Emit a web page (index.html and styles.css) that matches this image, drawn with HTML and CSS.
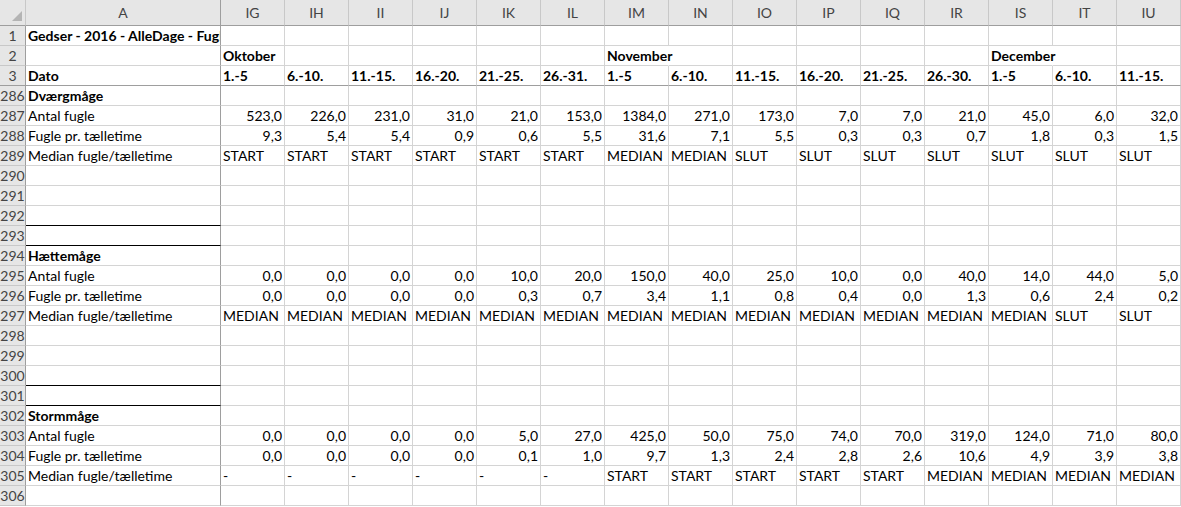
FILE: index.html
```html
<!DOCTYPE html>
<html lang="da">
<head>
    <meta charset="UTF-8">
    <title>Gedser - 2016 - AlleDage - Fugle</title>
    <link rel="stylesheet" href="styles.css">
</head>
<body>
    <table class="sheet">
        <colgroup>
            <col class="c-row">
            <col class="c-a">
            <col span="15" class="c-data">
        </colgroup>
        <thead>
            <tr class="head">
                <th class="corner"><span class="tri"></span></th>
                <th class="freeze-col">A</th>
                <th>IG</th><th>IH</th><th>II</th><th>IJ</th><th>IK</th><th>IL</th><th>IM</th><th>IN</th>
                <th>IO</th><th>IP</th><th>IQ</th><th>IR</th><th>IS</th><th>IT</th><th>IU</th>
            </tr>
        </thead>
        <tbody>
            <tr>
                <th class="rowhead">1</th>
                <td class="freeze-col bold clip">Gedser - 2016 - AlleDage - Fugle</td>
                <td></td><td></td><td></td><td></td><td></td><td></td><td></td><td></td>
                <td></td><td></td><td></td><td></td><td></td><td></td><td></td>
            </tr>
            <tr>
                <th class="rowhead">2</th>
                <td class="freeze-col"></td>
                <td class="bold">Oktober</td><td></td><td></td><td></td><td></td><td></td>
                <td class="bold spill">November</td><td></td><td></td><td></td><td></td><td></td>
                <td class="bold spill">December</td><td></td><td></td>
            </tr>
            <tr class="freeze-row">
                <th class="rowhead">3</th>
                <td class="freeze-col bold">Dato</td>
                <td class="bold">1.-5</td><td class="bold">6.-10.</td><td class="bold">11.-15.</td><td class="bold">16.-20.</td><td class="bold">21.-25.</td><td class="bold">26.-31.</td>
                <td class="bold">1.-5</td><td class="bold">6.-10.</td><td class="bold">11.-15.</td><td class="bold">16.-20.</td><td class="bold">21.-25.</td><td class="bold">26.-30.</td>
                <td class="bold">1.-5</td><td class="bold">6.-10.</td><td class="bold">11.-15.</td>
            </tr>

            <!-- Dværgmåge -->
            <tr>
                <th class="rowhead">286</th>
                <td class="freeze-col bold">Dværgmåge</td>
                <td></td><td></td><td></td><td></td><td></td><td></td><td></td><td></td>
                <td></td><td></td><td></td><td></td><td></td><td></td><td></td>
            </tr>
            <tr>
                <th class="rowhead">287</th>
                <td class="freeze-col">Antal fugle</td>
                <td class="num">523,0</td><td class="num">226,0</td><td class="num">231,0</td><td class="num">31,0</td><td class="num">21,0</td>
                <td class="num">153,0</td><td class="num">1384,0</td><td class="num">271,0</td><td class="num">173,0</td><td class="num">7,0</td>
                <td class="num">7,0</td><td class="num">21,0</td><td class="num">45,0</td><td class="num">6,0</td><td class="num">32,0</td>
            </tr>
            <tr>
                <th class="rowhead">288</th>
                <td class="freeze-col">Fugle pr. tælletime</td>
                <td class="num">9,3</td><td class="num">5,4</td><td class="num">5,4</td><td class="num">0,9</td><td class="num">0,6</td>
                <td class="num">5,5</td><td class="num">31,6</td><td class="num">7,1</td><td class="num">5,5</td><td class="num">0,3</td>
                <td class="num">0,3</td><td class="num">0,7</td><td class="num">1,8</td><td class="num">0,3</td><td class="num">1,5</td>
            </tr>
            <tr>
                <th class="rowhead">289</th>
                <td class="freeze-col">Median fugle/tælletime</td>
                <td>START</td><td>START</td><td>START</td><td>START</td><td>START</td><td>START</td>
                <td>MEDIAN</td><td>MEDIAN</td><td>SLUT</td><td>SLUT</td><td>SLUT</td><td>SLUT</td>
                <td>SLUT</td><td>SLUT</td><td>SLUT</td>
            </tr>
            <tr>
                <th class="rowhead">290</th>
                <td class="freeze-col"></td>
                <td></td><td></td><td></td><td></td><td></td><td></td><td></td><td></td>
                <td></td><td></td><td></td><td></td><td></td><td></td><td></td>
            </tr>
            <tr>
                <th class="rowhead">291</th>
                <td class="freeze-col"></td>
                <td></td><td></td><td></td><td></td><td></td><td></td><td></td><td></td>
                <td></td><td></td><td></td><td></td><td></td><td></td><td></td>
            </tr>
            <tr>
                <th class="rowhead">292</th>
                <td class="freeze-col sep"></td>
                <td></td><td></td><td></td><td></td><td></td><td></td><td></td><td></td>
                <td></td><td></td><td></td><td></td><td></td><td></td><td></td>
            </tr>
            <tr>
                <th class="rowhead">293</th>
                <td class="freeze-col sep"></td>
                <td></td><td></td><td></td><td></td><td></td><td></td><td></td><td></td>
                <td></td><td></td><td></td><td></td><td></td><td></td><td></td>
            </tr>

            <!-- Hættemåge -->
            <tr>
                <th class="rowhead">294</th>
                <td class="freeze-col bold">Hættemåge</td>
                <td></td><td></td><td></td><td></td><td></td><td></td><td></td><td></td>
                <td></td><td></td><td></td><td></td><td></td><td></td><td></td>
            </tr>
            <tr>
                <th class="rowhead">295</th>
                <td class="freeze-col">Antal fugle</td>
                <td class="num">0,0</td><td class="num">0,0</td><td class="num">0,0</td><td class="num">0,0</td><td class="num">10,0</td>
                <td class="num">20,0</td><td class="num">150,0</td><td class="num">40,0</td><td class="num">25,0</td><td class="num">10,0</td>
                <td class="num">0,0</td><td class="num">40,0</td><td class="num">14,0</td><td class="num">44,0</td><td class="num">5,0</td>
            </tr>
            <tr>
                <th class="rowhead">296</th>
                <td class="freeze-col">Fugle pr. tælletime</td>
                <td class="num">0,0</td><td class="num">0,0</td><td class="num">0,0</td><td class="num">0,0</td><td class="num">0,3</td>
                <td class="num">0,7</td><td class="num">3,4</td><td class="num">1,1</td><td class="num">0,8</td><td class="num">0,4</td>
                <td class="num">0,0</td><td class="num">1,3</td><td class="num">0,6</td><td class="num">2,4</td><td class="num">0,2</td>
            </tr>
            <tr>
                <th class="rowhead">297</th>
                <td class="freeze-col">Median fugle/tælletime</td>
                <td>MEDIAN</td><td>MEDIAN</td><td>MEDIAN</td><td>MEDIAN</td><td>MEDIAN</td><td>MEDIAN</td>
                <td>MEDIAN</td><td>MEDIAN</td><td>MEDIAN</td><td>MEDIAN</td><td>MEDIAN</td><td>MEDIAN</td>
                <td>MEDIAN</td><td>SLUT</td><td>SLUT</td>
            </tr>
            <tr>
                <th class="rowhead">298</th>
                <td class="freeze-col"></td>
                <td></td><td></td><td></td><td></td><td></td><td></td><td></td><td></td>
                <td></td><td></td><td></td><td></td><td></td><td></td><td></td>
            </tr>
            <tr>
                <th class="rowhead">299</th>
                <td class="freeze-col"></td>
                <td></td><td></td><td></td><td></td><td></td><td></td><td></td><td></td>
                <td></td><td></td><td></td><td></td><td></td><td></td><td></td>
            </tr>
            <tr>
                <th class="rowhead">300</th>
                <td class="freeze-col sep"></td>
                <td></td><td></td><td></td><td></td><td></td><td></td><td></td><td></td>
                <td></td><td></td><td></td><td></td><td></td><td></td><td></td>
            </tr>
            <tr>
                <th class="rowhead">301</th>
                <td class="freeze-col sep"></td>
                <td></td><td></td><td></td><td></td><td></td><td></td><td></td><td></td>
                <td></td><td></td><td></td><td></td><td></td><td></td><td></td>
            </tr>

            <!-- Stormmåge -->
            <tr>
                <th class="rowhead">302</th>
                <td class="freeze-col bold">Stormmåge</td>
                <td></td><td></td><td></td><td></td><td></td><td></td><td></td><td></td>
                <td></td><td></td><td></td><td></td><td></td><td></td><td></td>
            </tr>
            <tr>
                <th class="rowhead">303</th>
                <td class="freeze-col">Antal fugle</td>
                <td class="num">0,0</td><td class="num">0,0</td><td class="num">0,0</td><td class="num">0,0</td><td class="num">5,0</td>
                <td class="num">27,0</td><td class="num">425,0</td><td class="num">50,0</td><td class="num">75,0</td><td class="num">74,0</td>
                <td class="num">70,0</td><td class="num">319,0</td><td class="num">124,0</td><td class="num">71,0</td><td class="num">80,0</td>
            </tr>
            <tr>
                <th class="rowhead">304</th>
                <td class="freeze-col">Fugle pr. tælletime</td>
                <td class="num">0,0</td><td class="num">0,0</td><td class="num">0,0</td><td class="num">0,0</td><td class="num">0,1</td>
                <td class="num">1,0</td><td class="num">9,7</td><td class="num">1,3</td><td class="num">2,4</td><td class="num">2,8</td>
                <td class="num">2,6</td><td class="num">10,6</td><td class="num">4,9</td><td class="num">3,9</td><td class="num">3,8</td>
            </tr>
            <tr>
                <th class="rowhead">305</th>
                <td class="freeze-col">Median fugle/tælletime</td>
                <td>-</td><td>-</td><td>-</td><td>-</td><td>-</td><td>-</td>
                <td>START</td><td>START</td><td>START</td><td>START</td><td>START</td><td>MEDIAN</td>
                <td>MEDIAN</td><td>MEDIAN</td><td>MEDIAN</td>
            </tr>
            <tr>
                <th class="rowhead">306</th>
                <td class="freeze-col"></td>
                <td></td><td></td><td></td><td></td><td></td><td></td><td></td><td></td>
                <td></td><td></td><td></td><td></td><td></td><td></td><td></td>
            </tr>
        </tbody>
    </table>
</body>
</html>
```

FILE: styles.css
```css
body {
    margin: 0;
    background: #ffffff;
    font-family: Lato, "Open Sans", sans-serif;
    font-size: 14px;
    color: #000000;
    overflow: hidden;
}

.sheet {
    table-layout: fixed;
    border-collapse: separate;
    border-spacing: 0;
    width: 1181px;
}

.c-row { width: 26px; }
.c-a { width: 195px; }
.c-data { width: 64px; }

td, th {
    box-sizing: border-box;
    height: 20px;
    padding: 0 2px 1px 2px;
    border-right: 1px solid #d4d4d4;
    border-bottom: 1px solid #d4d4d4;
    white-space: nowrap;
    vertical-align: bottom;
    text-align: left;
    font-weight: normal;
    line-height: 17px;
}

/* column letters */
.head th {
    height: 26px;
    background: #e6e6e6;
    color: #444444;
    text-align: center;
    vertical-align: middle;
    padding: 0;
    border-right: 1px solid #c8c8c8;
    border-bottom: 1px solid #9e9e9e;
}

.corner {
    position: relative;
}

.tri {
    position: absolute;
    right: 3px;
    bottom: 4px;
    width: 0;
    height: 0;
    border-left: 10px solid transparent;
    border-bottom: 10px solid #b4b4b4;
}

/* row numbers */
.rowhead {
    background: #e6e6e6;
    color: #444444;
    text-align: center;
    padding: 0 0 1px 0;
    border-right: 1px solid #9e9e9e;
    border-bottom: 1px solid #c8c8c8;
}

.head .freeze-col,
.freeze-col {
    border-right: 1px solid #9e9e9e;
}

.freeze-row td,
.freeze-row th {
    border-bottom: 1px solid #9e9e9e;
}

.bold {
    font-weight: bold;
}

.num {
    text-align: right;
}

.clip {
    overflow: hidden;
    text-overflow: clip;
}

.spill {
    overflow: visible;
    border-right-color: #ffffff;
}

.sep {
    border-bottom: 1px solid #000000;
}
```
